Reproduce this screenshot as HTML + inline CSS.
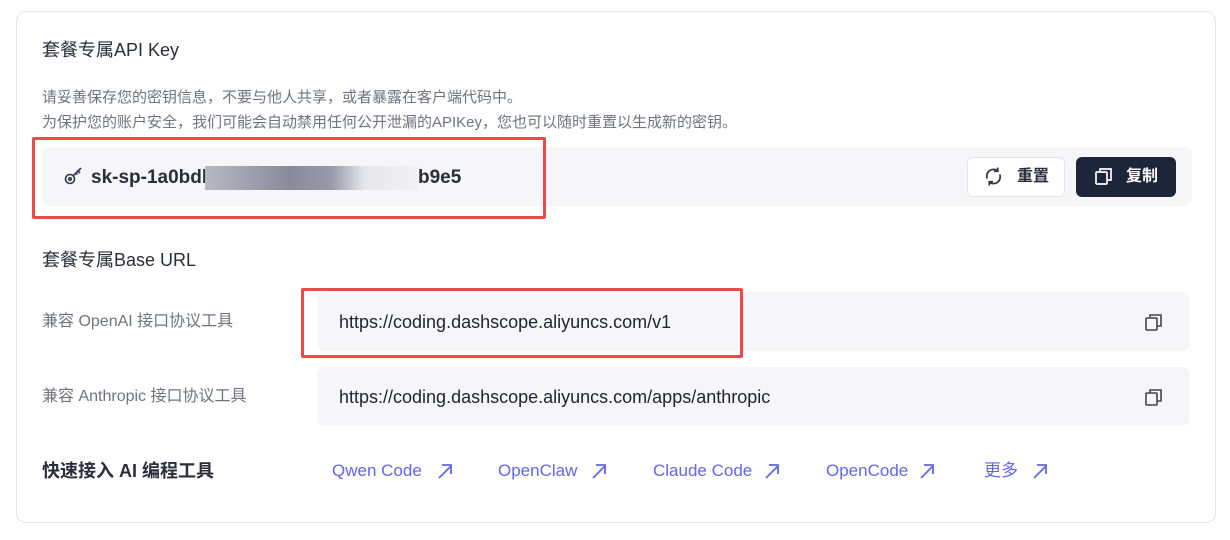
<!DOCTYPE html><html><head><meta charset="utf-8"><style>
body{margin:0;background:#fff;font-family:"Liberation Sans","Noto Sans CJK SC",sans-serif;width:1230px;height:540px;position:relative;overflow:hidden}
.a{position:absolute;white-space:nowrap;line-height:22px}
.card{left:16px;top:11px;width:1198px;height:510px;border:1px solid #e5e6ea;border-radius:10px}
.box{background:#f6f6f8;border-radius:8px}
.red{border:3px solid #f0474b;border-radius:2px}
.t{font-size:18px;color:#2a2d3a}
.d{font-size:15px;color:#70737f}
.l{font-size:16px;color:#70737f}
.u{font-size:18px;color:#1f2230}
.lk{font-size:17px;color:#6266e8}
</style></head><body>
<div class="a card"></div>
<div class="a t" style="left:42px;top:39px">套餐专属API Key</div>
<div class="a d" style="left:42px;top:87px">请妥善保存您的密钥信息，不要与他人共享，或者暴露在客户端代码中。</div>
<div class="a d" style="left:42px;top:112px">为保护您的账户安全，我们可能会自动禁用任何公开泄漏的APIKey，您也可以随时重置以生成新的密钥。</div>
<div class="a box" style="left:42px;top:147px;width:1150px;height:59px"></div>
<svg class="a" style="left:64px;top:166px" width="20" height="20" viewBox="0 0 20 20" fill="none" stroke="#33364a" stroke-width="1.6"><circle cx="6" cy="13" r="4.5"/><circle cx="6" cy="13" r="1.3"/><path d="M9.5 9.5L17 2M14 5l2 2M12 7l1.5 1.5"/></svg>
<div class="a" style="left:91px;top:167px;font-size:19px;font-weight:bold;color:#2a2d3a">sk-sp-1a0bdb</div>
<div class="a" style="left:205px;top:166px;width:212px;height:24px;background:linear-gradient(90deg,#b8b8c4,#8a8a9a 40%,#9a9aaa 60%,#e6e6ec 75%,#f0f0f4)"></div>
<div class="a" style="left:418px;top:167px;font-size:19px;font-weight:bold;color:#2a2d3a">b9e5</div>
<div class="a red" style="left:32px;top:137px;width:508px;height:76px"></div>
<div class="a" style="left:967px;top:157px;width:96px;height:38px;border:1px solid #e3e4ea;border-radius:6px;background:#fff"></div>
<svg class="a" style="left:983px;top:166px" width="21" height="21" viewBox="0 0 20 20" fill="none" stroke="#33364a" stroke-width="1.7"><path d="M4 12A6.5 6.5 0 0 1 14 4.5M16 8a6.5 6.5 0 0 1-10 7.5"/><path d="M14 1.5v3.5h-3.5M6 18.5V15h3.5"/></svg>
<div class="a" style="left:1017px;top:166px;font-size:16px;color:#2a2d3a;font-weight:bold">重置</div>
<div class="a" style="left:1076px;top:157px;width:100px;height:40px;background:#1c2539;border-radius:6px"></div>
<svg class="a" style="left:1094px;top:166px" width="20" height="20" viewBox="0 0 20 20" fill="none" stroke="#fff" stroke-width="1.7"><rect x="2" y="6" width="11" height="12" rx="1"/><path d="M6 6V3h11v11h-4"/></svg>
<div class="a" style="left:1126px;top:166px;font-size:16px;color:#fff;font-weight:bold">复制</div>
<div class="a t" style="left:42px;top:249px">套餐专属Base URL</div>
<div class="a l" style="left:42px;top:311px">兼容 OpenAI 接口协议工具</div>
<div class="a l" style="left:42px;top:386px">兼容 Anthropic 接口协议工具</div>
<div class="a box" style="left:317px;top:292px;width:873px;height:59px"></div>
<div class="a box" style="left:317px;top:367px;width:873px;height:59px"></div>
<div class="a u" style="left:339px;top:311px">https://coding.dashscope.aliyuncs.com/v1</div>
<div class="a u" style="left:339px;top:386px">https://coding.dashscope.aliyuncs.com/apps/anthropic</div>
<svg class="a" style="left:1144px;top:312px" width="20" height="20" viewBox="0 0 20 20" fill="none" stroke="#444" stroke-width="1.6"><rect x="2" y="6" width="11" height="12" rx="1"/><path d="M6 6V3h11v11h-4"/></svg>
<svg class="a" style="left:1144px;top:387px" width="20" height="20" viewBox="0 0 20 20" fill="none" stroke="#444" stroke-width="1.6"><rect x="2" y="6" width="11" height="12" rx="1"/><path d="M6 6V3h11v11h-4"/></svg>
<div class="a red" style="left:301px;top:288px;width:436px;height:64px"></div>
<div class="a t" style="left:42px;top:460px;font-weight:bold">快速接入 AI 编程工具</div>
<div class="a lk" style="left:332px;top:460px">Qwen Code</div>
<div class="a lk" style="left:498px;top:460px">OpenClaw</div>
<div class="a lk" style="left:653px;top:460px">Claude Code</div>
<div class="a lk" style="left:826px;top:460px">OpenCode</div>
<div class="a lk" style="left:984px;top:460px">更多</div>
<svg class="a" style="left:0;top:0" width="1230" height="540" fill="none" stroke="#6266e8" stroke-width="1.8">
<g id="ar"><path d="M439 478l12-12M442 465h9v9"/></g>
<use href="#ar" x="154"/><use href="#ar" x="327"/><use href="#ar" x="482"/><use href="#ar" x="595"/>
</svg>
</body></html>
